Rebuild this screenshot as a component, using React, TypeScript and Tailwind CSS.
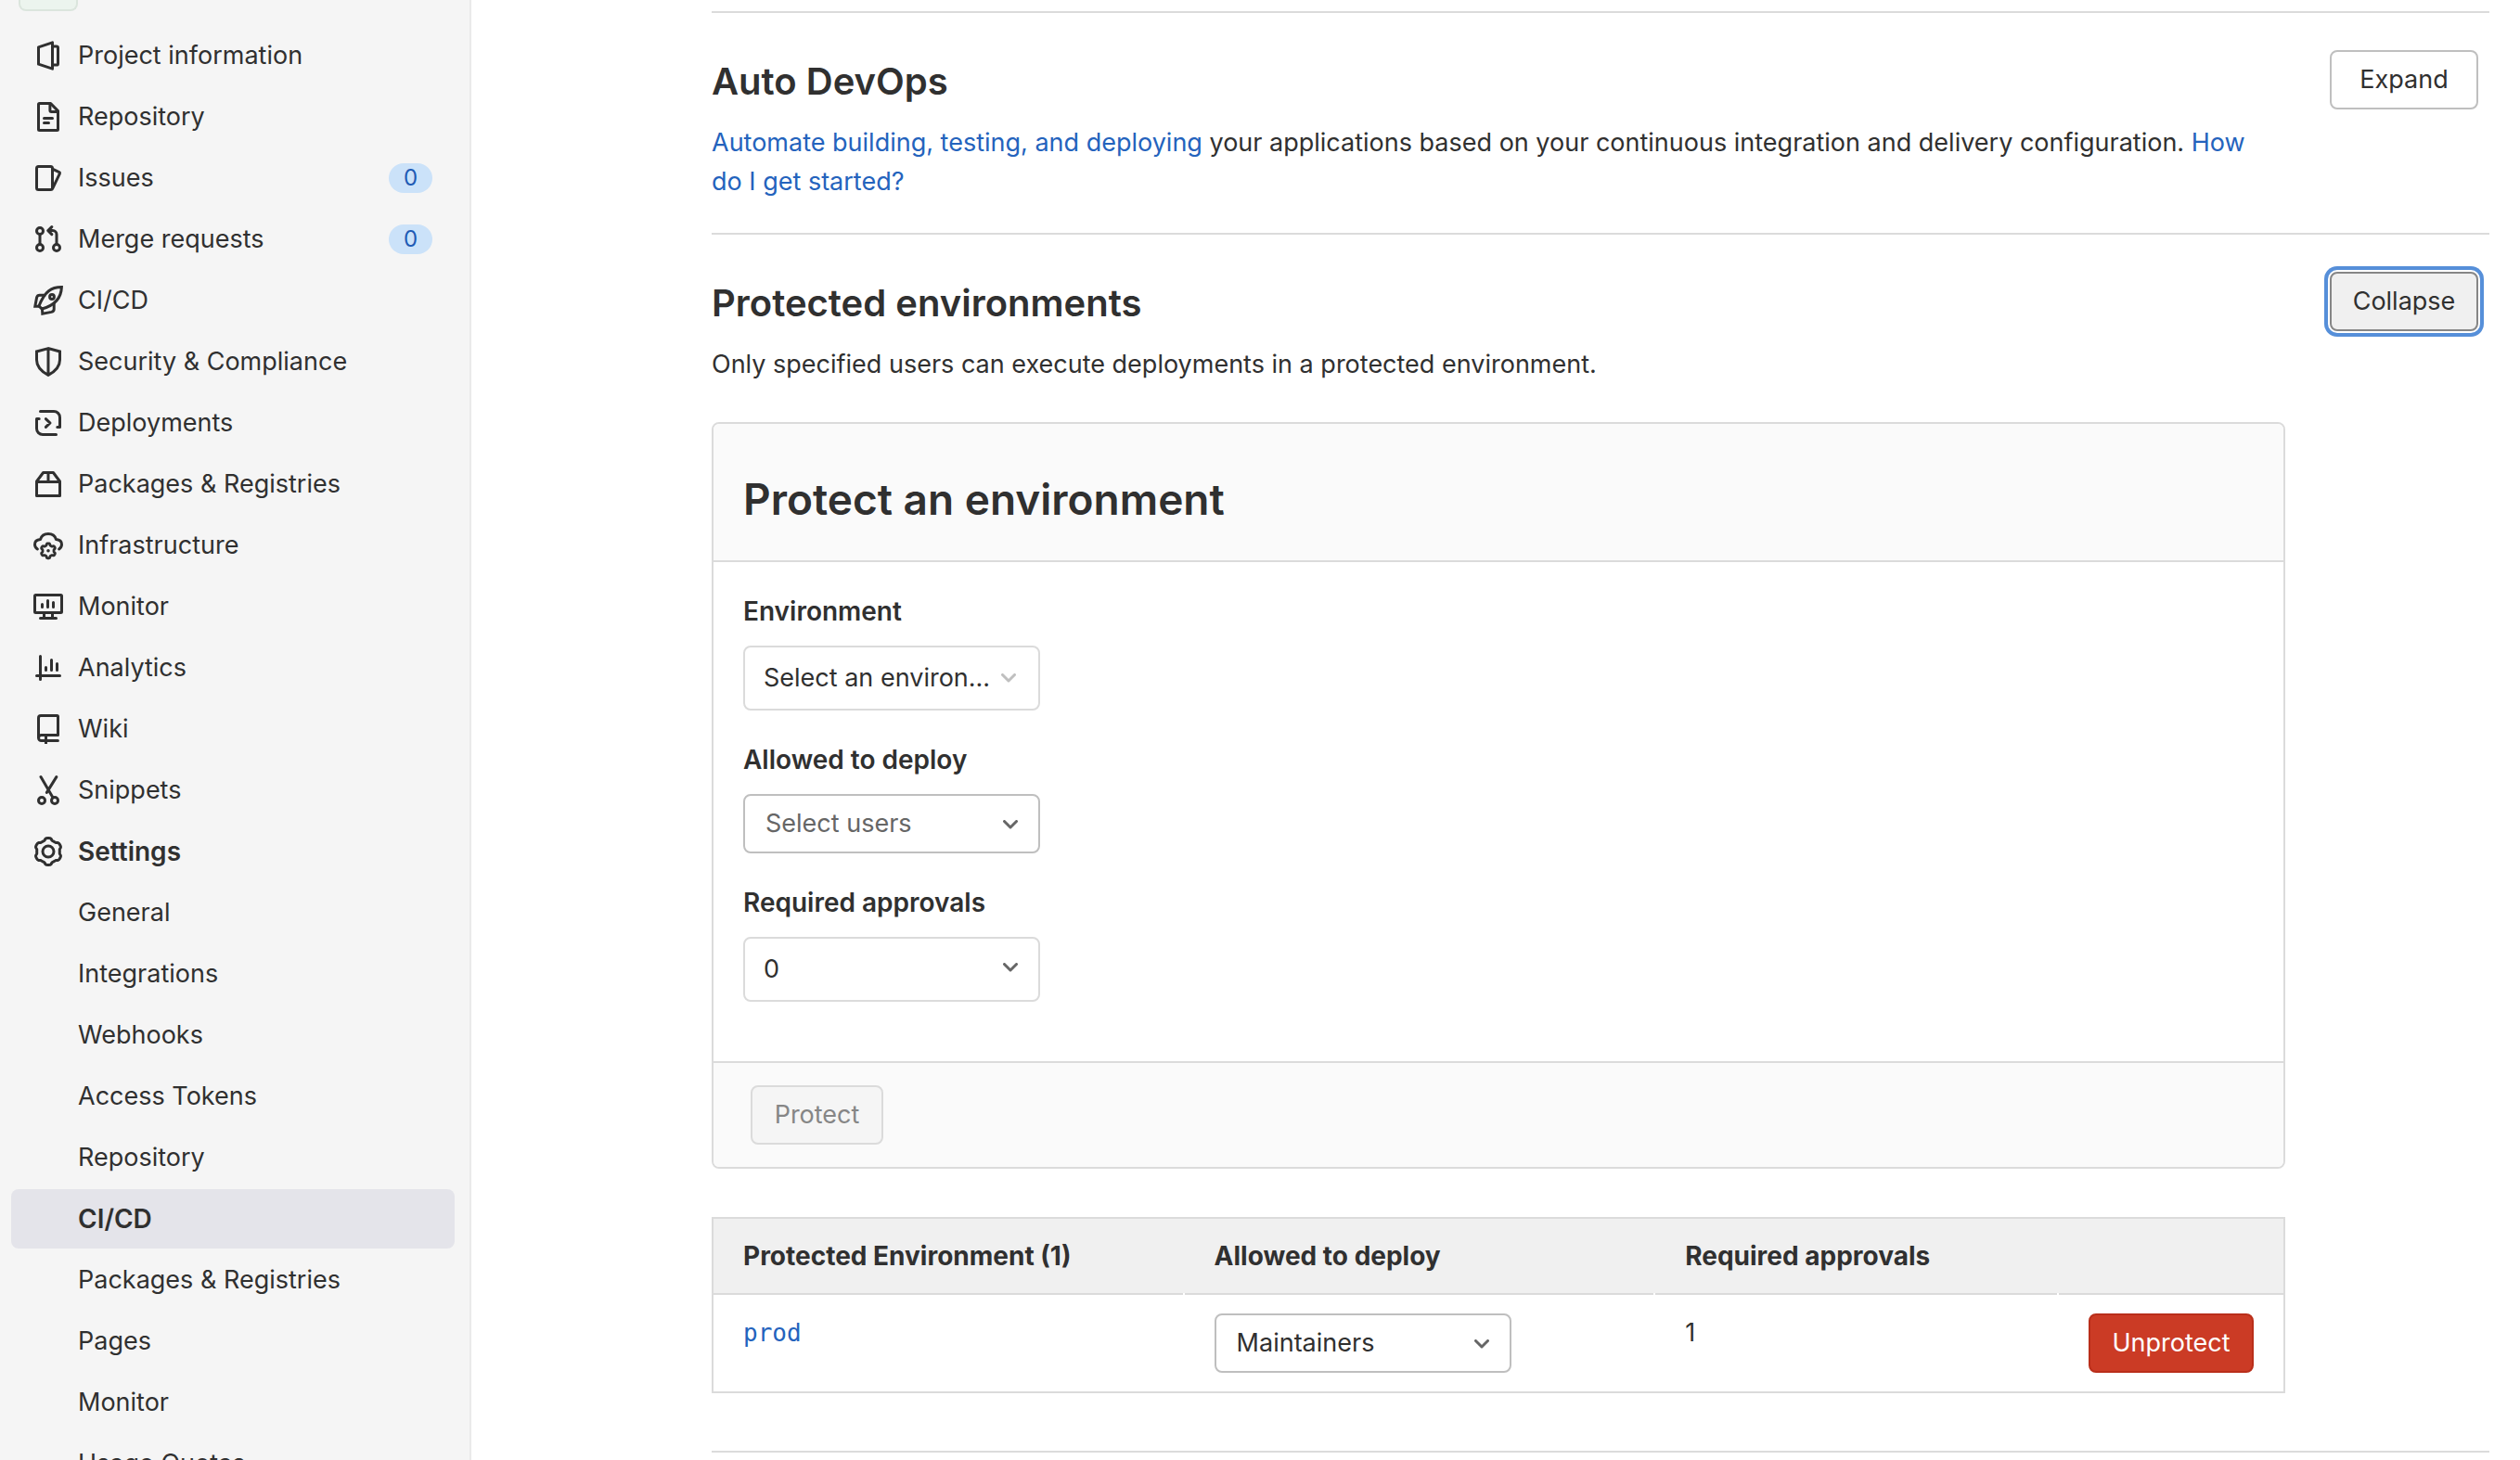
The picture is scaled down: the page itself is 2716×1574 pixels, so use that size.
import React from "react";

type IconProps = { children: React.ReactNode };

function Icon({ children }: IconProps) {
  return (
    <svg
      viewBox="0 0 16 16"
      className="size-8 shrink-0"
      fill="none"
      stroke="currentColor"
      strokeWidth="1.5"
      strokeLinecap="round"
      strokeLinejoin="round"
      aria-hidden="true"
    >
      {children}
    </svg>
  );
}

/* Outline of a six-toothed cog with one tooth pointing up. */
function cogPath(cx: number, cy: number, base: number, depth: number) {
  const points: string[] = [];
  for (let i = 0; i < 180; i++) {
    const a = (i / 180) * Math.PI * 2;
    const wave = Math.tanh(2.2 * Math.cos(6 * a)) / Math.tanh(2.2);
    const r = base + depth * wave;
    points.push(`${(cx + r * Math.sin(a)).toFixed(2)} ${(cy - r * Math.cos(a)).toFixed(2)}`);
  }
  return `M${points.join("L")}Z`;
}

const icons = {
  project: (
    <Icon>
      <path d="M10.25.9v14.2l-7.5-2.5V3.4z" />
      <path d="M10.5 2.95h1.9a.85.85 0 0 1 .85.85v8.4a.85.85 0 0 1-.85.85h-1.9" />
    </Icon>
  ),
  repository: (
    <Icon>
      <path d="M2.75 1.25v13.5c0 .3.2.5.5.5h9.5c.3 0 .5-.2.5-.5V4.8L9.3.75H3.25c-.3 0-.5.2-.5.5z" />
      <path d="M8.95 1v3.5c0 .4.3.75.75.75H13M5.75 8.75h4.5M5.75 11.25h2.5" />
    </Icon>
  ),
  issues: (
    <Icon>
      <rect x="1.75" y="1.75" width="8.5" height="12.5" rx="1" />
      <path d="M10.5 3.2l3.4 1.6c.3.15.4.45.3.75L10.5 13.3" />
    </Icon>
  ),
  merge: (
    <Icon>
      <circle cx="3.5" cy="3.5" r="1.75" />
      <circle cx="3.5" cy="12.5" r="1.75" />
      <circle cx="12.5" cy="12.5" r="1.75" />
      <path d="M3.5 5.5v5M8.2 3.3h2.2a2.1 2.1 0 0 1 2.1 2.1v5.1M9.9 1.3L7.9 3.3l2 2" />
    </Icon>
  ),
  rocket: (
    <Icon>
      <path strokeLinejoin="miter" d="M15.2.8C9.6.8 6.2 3 3 10.9l1.6 1.6C11.5 10.6 15 6.6 15.2.8z" />
      <path
        strokeLinejoin="miter"
        strokeLinecap="butt"
        d="M6.6 5.1H3.4c-.8 0-1.4.5-1.6 1.2L.9 11.1h2.4M4.7 12.2l.2 2.9 4.8-.9c.9-.2 1.4-.8 1.4-1.6V9.4"
      />
      <circle cx="10" cy="6" r="1.2" />
    </Icon>
  ),
  shield: (
    <Icon>
      <path strokeLinejoin="miter" d="M8 .8L1.75 2.5V7c0 4 3 6.5 6.25 8.2 3.25-1.7 6.25-4.2 6.25-8.2V2.5zM8 1v14" />
    </Icon>
  ),
  deployments: (
    <Icon>
      <path d="M3.75 1.75H11A3.25 3.25 0 0 1 14.25 5v5.25H12.9M12.25 14.25H5A3.25 3.25 0 0 1 1.75 11V5.75H3.1M6.7 5.8L9 8l-2.3 2.2" />
    </Icon>
  ),
  packages: (
    <Icon>
      <path d="M1.75 6.75v7.5h12.5v-7.5zM1.75 6.5L5.3 1.75h5.4l3.55 4.75M8 2v4.5" />
    </Icon>
  ),
  infrastructure: (
    <Icon>
      <path d="M2.2 10C1.3 9.4.75 8.5.75 7.5c0-1.4 1-2.5 3-2.7C4.3 2.9 5.9 1.75 8 1.75s3.7 1.15 4.25 3.05c2 .2 3 1.3 3 2.7 0 1-.55 1.9-1.45 2.5" />
      <path strokeWidth="1.4" d={cogPath(8, 10.9, 3.5, 0.5)} />
      <circle cx="8" cy="10.9" r=".9" fill="currentColor" stroke="none" />
    </Icon>
  ),
  monitor: (
    <Icon>
      <rect x=".75" y="1.75" width="14.5" height="9.5" rx=".5" />
      <path d="M5.75 12v2M10.25 12v2M3.75 14.25h8.5M4.75 6.75v1.5M7.75 4.75v3.5M10.75 5.75v2.5" />
    </Icon>
  ),
  analytics: (
    <Icon>
      <path d="M3.75 1.75v12.5M1.75 12.25h12.5M6.75 7.75v1.5M9.75 3.75v5.5M12.75 5.75v3.5" />
    </Icon>
  ),
  wiki: (
    <Icon>
      <path d="M2.75 12.75V2c0-.7.5-1.25 1.25-1.25h8.75c.3 0 .5.2.5.5v10H4.25a1.5 1.5 0 0 0 0 3h8.95" />
      <path strokeLinecap="butt" d="M6.75 11.5V16" />
    </Icon>
  ),
  snippets: (
    <Icon>
      <circle cx="4.5" cy="13.5" r="1.75" />
      <circle cx="11.5" cy="13.5" r="1.75" />
      <path d="M4 .8L10.4 11.8M12.4.8L7.2 9.2" />
    </Icon>
  ),
  settings: (
    <Icon>
      <path d={cogPath(8, 8, 6.7, 0.55)} />
      <circle cx="8" cy="8" r="3" />
    </Icon>
  ),
};

type NavItem = { label: string; icon?: React.ReactNode; count?: number; bold?: boolean; active?: boolean };

const navItems: NavItem[] = [
  { label: "Project information", icon: icons.project },
  { label: "Repository", icon: icons.repository },
  { label: "Issues", icon: icons.issues, count: 0 },
  { label: "Merge requests", icon: icons.merge, count: 0 },
  { label: "CI/CD", icon: icons.rocket },
  { label: "Security & Compliance", icon: icons.shield },
  { label: "Deployments", icon: icons.deployments },
  { label: "Packages & Registries", icon: icons.packages },
  { label: "Infrastructure", icon: icons.infrastructure },
  { label: "Monitor", icon: icons.monitor },
  { label: "Analytics", icon: icons.analytics },
  { label: "Wiki", icon: icons.wiki },
  { label: "Snippets", icon: icons.snippets },
  { label: "Settings", icon: icons.settings, bold: true },
  { label: "General" },
  { label: "Integrations" },
  { label: "Webhooks" },
  { label: "Access Tokens" },
  { label: "Repository" },
  { label: "CI/CD", bold: true, active: true },
  { label: "Packages & Registries" },
  { label: "Pages" },
  { label: "Monitor" },
  { label: "Usage Quotas" },
];

function Sidebar() {
  return (
    <aside className="w-[508px] shrink-0 border-r-2 border-[#eaeaea] bg-[#f5f5f5] pl-3 pr-4">
      <div className="ml-2 h-3 w-16 rounded-b-lg border-2 border-t-0 border-[#dbe5dd] bg-[#ecf4ee]" />
      <nav className="mt-4">
        <ul className="flex flex-col gap-0.5">
          {navItems.map((item, i) => (
            <li key={i}>
              <a
                href="#"
                className={`flex h-16 items-center gap-4 rounded-lg px-6 ${item.active ? "bg-[#e4e4ea]" : ""} ${item.bold ? "text-[28px] font-semibold" : ""}`}
              >
                {item.icon ?? <span className="w-8 shrink-0" />}
                <span className="grow">{item.label}</span>
                {item.count !== undefined && (
                  <span className="flex h-8 w-[47px] items-center justify-center rounded-full bg-[#cbe2f9] text-2xl text-[#1f5bb5]">
                    {item.count}
                  </span>
                )}
              </a>
            </li>
          ))}
        </ul>
      </nav>
    </aside>
  );
}

type DropdownProps = { id: string; value: string; label?: string; className: string; chevron: string };

function Dropdown({ id, value, label, className, chevron }: DropdownProps) {
  return (
    <div className="relative w-80">
      <select
        id={id}
        aria-label={label}
        className={`block w-full appearance-none rounded-lg border-2 bg-white pr-10 ${className}`}
      >
        <option>{value}</option>
      </select>
      <svg
        viewBox="0 0 16 10"
        className={`pointer-events-none absolute h-2.5 w-4 ${chevron}`}
        fill="none"
        stroke="currentColor"
        strokeWidth="3"
        strokeLinecap="round"
        strokeLinejoin="round"
        aria-hidden="true"
      >
        <path d="M1.5 1.5L8 8l6.500-6.500" />
      </svg>
    </div>
  );
}

type SectionProps = { title: string; action: React.ReactNode; children: React.ReactNode };

function Section({ title, action, children }: SectionProps) {
  return (
    <section className="flex items-start gap-12 border-t-2 border-[#dbdbdb] pr-3 pt-10">
      <div className="min-w-0 grow">
        <h4 className="text-[40px] font-semibold leading-[68px]">{title}</h4>
        {children}
      </div>
      {action}
    </section>
  );
}

const linkClass = "text-[#2463bd]";
const labelClass = "block w-fit text-[28px] font-semibold";
const headClass =
  "relative h-[82px] border-b-2 border-[#dbdbdb] px-8 py-0 text-left text-[28px] font-bold after:absolute after:-bottom-0.5 after:right-0 after:size-0.5 after:bg-white last:after:hidden";

export default function App() {
  return (
    <div className="flex h-screen overflow-hidden bg-white font-['Inter',sans-serif] text-[27px] leading-[42px] text-[#303030]">
      <Sidebar />
      <main className="min-w-0 grow pl-[259px] pr-[33px] pt-3">
        <Section
          title="Auto DevOps"
          action={
            <button type="button" className="h-16 w-40 shrink-0 rounded-lg border-2 border-[#bfbfbf] bg-white">
              Expand
            </button>
          }
        >
          <p className="mb-[34px] mt-[11px] pr-6">
            <a href="#" className={linkClass}>
              Automate building, testing, and deploying
            </a>{" "}
            your applications based on your continuous integration and delivery configuration.{" "}
            <a href="#" className={linkClass}>
              How do I get started?
            </a>
          </p>
        </Section>

        <Section
          title="Protected environments"
          action={
            <button
              type="button"
              className="h-16 w-40 shrink-0 rounded-lg border-2 border-[#868686] bg-[#f0f0f0] shadow-[0_0_0_2px_#fff,0_0_0_6px_#568fd9]"
            >
              Collapse
            </button>
          }
        >
          <p className="mt-[11px]">Only specified users can execute deployments in a protected environment.</p>

          <form className="mt-[41px] overflow-hidden rounded-lg border-2 border-[#dbdbdb]">
            <div className="border-b-2 border-[#dbdbdb] bg-[#fafafa] px-8 pb-9 pt-[51px]">
              <h3 className="text-[46px] font-semibold leading-[60px]">Protect an environment</h3>
            </div>
            <div className="flex flex-col gap-8 px-8 pb-16 pt-8">
              <div className="flex flex-col gap-4">
                <label htmlFor="environment" className={labelClass}>
                  Environment
                </label>
                <Dropdown
                  id="environment"
                  value="Select an environ..."
                  className="h-[70px] border-[#dbdbdb] pl-5"
                  chevron="right-[26px] top-[30px] text-[#bfbfbf]"
                />
              </div>
              <div className="flex flex-col gap-4">
                <label htmlFor="deployers" className={labelClass}>
                  Allowed to deploy
                </label>
                <Dropdown
                  id="deployers"
                  value="Select users"
                  className="h-16 border-[#bfbfbf] pl-[22px] text-[#666666]"
                  chevron="right-6 top-7 text-[#666666]"
                />
              </div>
              <div className="flex flex-col gap-4">
                <label htmlFor="approvals" className={labelClass}>
                  Required approvals
                </label>
                <Dropdown
                  id="approvals"
                  value="0"
                  className="h-[70px] border-[#dbdbdb] pl-5"
                  chevron="right-6 top-7 text-[#666666]"
                />
              </div>
            </div>
            <div className="border-t-2 border-[#dbdbdb] bg-[#fafafa] px-10 py-6">
              <button
                type="submit"
                disabled
                className="block h-16 w-[143px] rounded-lg border-2 border-[#dbdbdb] bg-[#f5f5f5] text-[#868686]"
              >
                Protect
              </button>
            </div>
          </form>

          <table className="mb-[62px] mt-[52px] w-full table-fixed border-separate border-spacing-0 border-2 border-[#dbdbdb]">
            <colgroup>
              <col className="w-[30%]" />
              <col className="w-[30%]" />
              <col />
              <col className="w-[242px]" />
            </colgroup>
            <thead className="bg-[#f0f0f0]">
              <tr>
                <th className={headClass}>Protected Environment (1)</th>
                <th className={headClass}>Allowed to deploy</th>
                <th className={headClass}>Required approvals</th>
                <th className={headClass} />
              </tr>
            </thead>
            <tbody>
              <tr className="align-top">
                <td className="px-8 py-5">
                  <a href="#" className="font-['DejaVu_Sans_Mono',monospace] text-[26px] text-[#2463bd]">
                    prod
                  </a>
                </td>
                <td className="px-8 py-5">
                  <Dropdown
                    id="prod-deployers"
                    label="Allowed to deploy to prod"
                    value="Maintainers"
                    className="h-16 border-[#bfbfbf] pl-[22px]"
                    chevron="right-6 top-7 text-[#666666]"
                  />
                </td>
                <td className="px-8 py-5">1</td>
                <td className="px-8 py-5">
                  <button
                    type="button"
                    className="block h-16 w-full rounded-lg border-2 border-[#b92e1a] bg-[#cb3b25] text-white"
                  >
                    Unprotect
                  </button>
                </td>
              </tr>
            </tbody>
          </table>
        </Section>
        <hr className="border-t-2 border-[#dbdbdb]" />
      </main>
    </div>
  );
}
